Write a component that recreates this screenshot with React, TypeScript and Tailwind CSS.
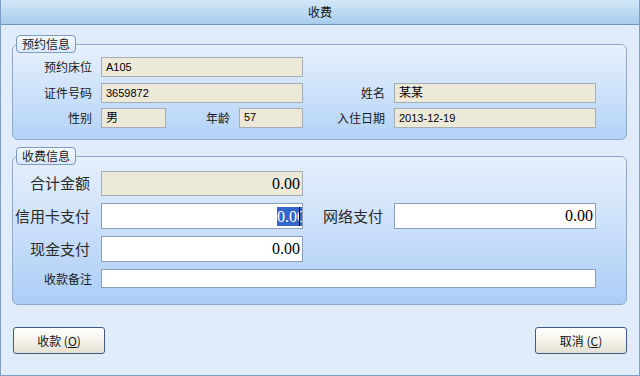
const cjk = "font-['SimSun','Noto_Sans_CJK_SC',sans-serif]";

function Tab({ text }: { text: string }) {
  return (
    <div className="relative z-10 ml-[4px] -mb-[9px] h-[18px] w-[60px] rounded-[4px] border border-[#7b9cc6] bg-gradient-to-b from-[#f3f8fe] to-[#dbe8f9] text-center text-[12px] leading-[16px] text-[#1c1c1c]">
      {text}
    </div>
  );
}

function Field({ value, className = '' }: { value: string; className?: string }) {
  return (
    <div className={`flex h-[20px] items-center border border-[#a7adb4] bg-[#ede9d9] pl-[4px] text-[11px] text-black font-['Liberation_Sans','Noto_Sans_CJK_SC',sans-serif] ${className}`}>
      {value}
    </div>
  );
}

function Label({ text, className = '' }: { text: string; className?: string }) {
  return <div className={`flex items-center justify-end text-[12px] text-[#1a1a1a] ${className}`}>{text}</div>;
}

function Money({ value, beige, selected, h }: { value: string; beige?: boolean; selected?: boolean; h: string }) {
  return (
    <div
      className={`flex ${h} items-center justify-end overflow-hidden border pr-[2px] text-[16px] text-black font-['Liberation_Serif',serif] ${
        beige ? 'border-[#a7adb4] bg-[#ede9d9]' : 'border-[#8a9fb8] bg-white'
      }`}
    >
      {selected ? (
        <span className="relative -mr-[5px] flex items-center bg-[#3468c8] leading-[19px] text-white">
          {value}
          <span className="absolute right-[5px] top-0 h-[19px] w-[1px] bg-black" />
        </span>
      ) : (
        value
      )}
    </div>
  );
}

function BigLabel({ text }: { text: string }) {
  return <div className="flex items-center justify-end pr-[2px] text-[15px] text-[#2a2a2a]">{text}</div>;
}

function Button({ text, k }: { text: string; k: string }) {
  return (
    <button className="h-[27px] w-[92px] rounded-[3px] border border-[#3f5d84] bg-gradient-to-b from-[#ffffff] via-[#f4f2ea] to-[#e4e0d2] text-[12px] text-[#111]">
      {text} (<span className="underline">{k}</span>)
    </button>
  );
}

export default function App() {
  return (
    <div className={`flex h-[376px] w-[640px] flex-col border-x border-b border-[#7d9ec8] bg-[#e1ecfa] ${cjk}`}>
      {/* Title bar */}
      <div className="flex h-[25px] shrink-0 items-center justify-center border-b border-[#7196c4] bg-gradient-to-b from-[#d3e7f7] to-[#a7cdee] text-[12px] text-[#111]">
        收费
      </div>

      <div className="flex flex-col pl-[11px] pr-[12px] pt-[10px]">
        {/* 预约信息 */}
        <Tab text="预约信息" />
        <div className="rounded-[6px] border border-[#8ea9cc] bg-gradient-to-b from-[#e8f1fc] to-[#b3d2f7] pb-[12px] pt-[12px]">
          <div className="grid grid-cols-[79px_202px_73px_202px] grid-rows-[20px_19px_19px] gap-x-[9px] gap-y-[6px]">
            <Label text="预约床位" />
            <Field value="A105" />
            <div />
            <div />

            <Label text="证件号码" />
            <Field value="3659872" className="h-[19px]" />
            <Label text="姓名" />
            <Field value="某某" className="h-[19px] text-[12px]" />

            <Label text="性别" />
            <div className="flex items-center justify-between">
              <Field value="男" className="h-[19px] w-[65px] text-[12px]" />
              <div className="flex items-center">
                <span className="mr-[9px] text-[12px] text-[#1a1a1a]">年龄</span>
                <Field value="57" className="h-[19px] w-[64px]" />
              </div>
            </div>
            <Label text="入住日期" />
            <Field value="2013-12-19" className="h-[19px]" />
          </div>
        </div>

        {/* 收费信息 */}
        <div className="mt-[7px]">
          <Tab text="收费信息" />
        </div>
        <div className="rounded-[6px] border border-[#8ea9cc] bg-gradient-to-b from-[#e6f0fc] to-[#adcdf6] pb-[16px] pt-[14px]">
          <div className="grid grid-cols-[79px_202px_73px_202px] grid-rows-[25px_26px_26px_19px] gap-x-[9px] gap-y-[7px]">
            <BigLabel text="合计金额" />
            <Money value="0.00" beige h="h-[25px]" />
            <div />
            <div />

            <div className="flex items-center justify-end whitespace-nowrap pr-[2px] text-[15px] text-[#2a2a2a]">信用卡支付</div>
            <Money value="0.00" selected h="h-[26px]" />
            <BigLabel text="网络支付" />
            <Money value="0.00" h="h-[26px]" />

            <BigLabel text="现金支付" />
            <Money value="0.00" h="h-[26px]" />
            <div />
            <div />

            <Label text="收款备注" className="pr-[0px]" />
            <div className="col-span-3 h-[19px] border border-[#8a9fb8] bg-white" />
          </div>
        </div>

        {/* Buttons */}
        <div className="mt-[22px] flex justify-between pl-[1px]">
          <Button text="收款" k="O" />
          <Button text="取消" k="C" />
        </div>
      </div>
    </div>
  );
}
